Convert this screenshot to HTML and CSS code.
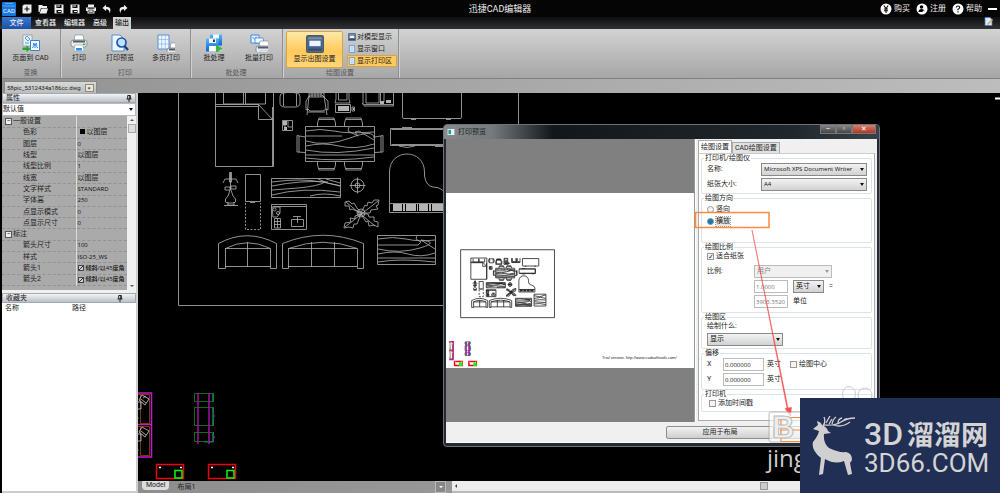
FILE: index.html
```html
<!DOCTYPE html>
<html lang="zh-CN">
<head>
<meta charset="utf-8">
<meta name="viewport" content="width=device-width, initial-scale=1">
<title>迅捷CAD编辑器</title>
<link rel="stylesheet" href="styles.css">
</head>
<body>
<svg class="defs" aria-hidden="true">
  <defs>
    <linearGradient id="gBlue" x1="0" y1="0" x2="0" y2="1"><stop offset="0" stop-color="#5cb8f8"/><stop offset="1" stop-color="#0b63cf"/></linearGradient>
    <symbol id="i-floppy" viewBox="0 0 10 10"><path fill="#eee" d="M.5.5h9v9h-9z"/><path fill="#111" d="M2.5 1h5v3h-5zM2.500 6h5v3.500h-5z"/><path fill="#eee" d="M3 1.500h3v1h-3zM4 7h3v1h-3z"/></symbol>
    <symbol id="i-printer" viewBox="0 0 18 18"><path fill="#fff" stroke="#7f93a8" stroke-width=".7" d="M5 1h8l1 6H4z"/><rect x="1" y="6" width="16" height="7" rx="2.500" fill="#e7ebef" stroke="#77808a" stroke-width=".8"/><path fill="#555c66" d="M3 6.500h12v2H3z"/><path fill="#3bbd35" d="M13 9.500h2.500v1.500H13z"/><path fill="#fff" stroke="#8aa" stroke-width=".6" d="M5 11h8l1 6H4z"/><path fill="#2c8cf0" d="M6 14h6v2.500H6z"/></symbol>
    <symbol id="i-page" viewBox="0 0 9 9"><path fill="#dcecff" stroke="#4b86d0" stroke-width=".8" d="M1.500.5h6v8h-6z"/><path stroke="#7badE6" stroke-width=".6" fill="none" d="M3 2.500h3M3 4.500h3M3 6.500h3"/></symbol>
    <symbol id="i-screen" viewBox="0 0 16 16"><rect x=".5" y=".5" width="15" height="15" rx="1.500" fill="#526987" stroke="#4d5968"/><path fill="#7f8c9c" d="M2 2h12v3H2z"/><rect x="2.500" y="4.500" width="11" height="6" fill="#eef5ff" stroke="#375b95"/><path fill="#334c70" d="M2 12h12v2H2z"/></symbol>
    <symbol id="i-pin" viewBox="0 0 6 7"><path fill="none" stroke="#111" stroke-width=".9" d="M1.700.5h2.600V4M1.700.5V4M.5 4h5M3 4v3M3.800.5V4"/></symbol>

    <g id="plan" class="plan" fill="none">
      <path d="M178.500 59.500H518.500V305.500H178.500Z"/>
      <path d="M215.500 89.500H273.500V166.500H215.500ZM272.500 107V166M215.500 104.500H258.500L272.500 119.500H258.500V104.500M215.500 106.500H258M223.500 92V104H243.500V92M245.500 92V104H265.500V92"/>
      <path d="M283 93Q280 93 280 97V103Q280 107 285 107H295Q300 107 300 103V97Q300 93 297 93M283.500 90V106M296.500 90V106M284 93Q290 91 296 93"/>
      <path d="M310 95L306 101V110L308 109L310 111H323L326 109L328 110V101L322 95ZM309 96L307 115M324 96L327 115M308 112L325 112M309 93H324V97H309ZM312 93V97M315 93V97M318 93V97M321 93V97"/>
      <path d="M336 90.500H349V99L350 103H335L336 99ZM338.500 91V100H347V91M335.500 104.500H350.500V112.500H335.500ZM352 107H354.500V111H352Z"/>
      <path class="solid" d="M338 106H349V111H338ZM353 108H354V110H353Z"/>
      <path d="M363 90V103L362 104H364V106H393.500V90M366 90V103H379V90M380.500 90V104M384 90V102M364.500 104.500H393"/>
      <path class="solid" d="M380 101H384V104H380ZM386 100H391V103H386Z"/>
      <path d="M402.500 91.500H461.500V117.500Q461.500 118.500 460 118.500H404Q402.500 118.500 402.500 117.500ZM411 119.500H416M446 119.500H451"/>
      <path d="M282.500 120.500H292.500V130.500H282.500ZM285 121V130M288 121V127H292M283 125H286"/>
      <path class="solid" d="M283 121H287V125H283ZM284 127H287V130H284Z"/>
      <path d="M305.500 126.500H374.500V161.500H305.500Z"/>
      <path d="M306 131Q320 128 334 131T374 132M306 136H342M306 141Q326 147 350 138T374 138M306 146Q323 142 339 146T374 144M306 150Q336 156 374 148M306 155H374M306 158Q336 162 374 157M349 127L348 131L358 136L355 132L359 131L374 140"/>
      <path d="M317.500 126V123L319 118H334L335.500 123V126M344.500 126V123L346 118H361L362.500 123V126M317.500 162V165L319 170H334L335.500 165V162M344.500 162V165L346 170H361L362.500 165V162M305 137L297 135.500V152L305 152.500M375 137L383 135.500V152L375 152.500M299 136V152M381 136V152M319 119.500H334M346 119.500H361M319 168.500H334M346 168.500H361"/>
      <path d="M390.500 128.500H449.500V145.500H390.500ZM391.500 129.500H448.500V144.500H391.500M402 127.500H412M399 146Q407 149 415 146M435 146.500H445"/>
      <path d="M389.500 212.500V172C389.500 148 424.500 148 424.500 172V176Q426 186 433 187Q444 187 447.500 198V212.500ZM390 203.500H447"/>
      <path class="solid" d="M393 204H402V211H393ZM403 204H405V211H403ZM406 204H416V211H406ZM417 204H418V211H417ZM419 204H428V211H419ZM429 204H431V211H429ZM432 204H443V211H432Z"/>
      <path d="M230.500 172V190M223 183L225 179H236L238 183M225 187H230V190H225ZM231 186H236V189H231ZM230 190L228 196L225.500 199V202L228 203H233L235.500 202V199L233 196L231 190M227 205H234V202M228 202V205M224 205.500H238"/>
      <path d="M229.500 172.500H231.500V182H229.500Z"/>
      <path d="M245.500 174.500H260.500V201.500H245.500ZM250 202.500H255"/>
      <path stroke-dasharray="2 1.500" d="M245.500 203V229.500H260.500V203"/>
      <path d="M271.500 178.500H340.500V197.500H271.500ZM272 182Q301 178 322 182T340 186M272 186Q301 180 328 182M272 190L298 188Q319 186 325 182M272 195Q302 187 340 192M310 196Q324 192 340 196M318 179Q328 184 340 186M326 179L340 183"/>
      <circle cx="357.500" cy="185.500" r="6.500"/><circle cx="357.500" cy="185.500" r="2.500"/><path d="M349.500 185.500H365.500M357.500 177.500V193.500"/>
      <path d="M271.500 204.500H306.500V229.500H271.500ZM273 206.500H306M272 207H280V213L277 217H273ZM291.500 219.500H303.500V226.500H291.500ZM293 216.500H301M297.500 217V223M274.500 218.500H280.500V228H274.500ZM277.500 218V228M274 221.500H281M274 224.500H281"/>
      <circle cx="274.500" cy="209.500" r="1.500"/><circle cx="278" cy="213" r="1.500"/>
      <path d="M361 213L352 209L350 210L349 206L345 206V202L349 201L352 204L354 203L357 208ZM361 213L365 205L367 206L368 202L372 203L374 200L379 200L378 205L376 206L378 209L371 210L370 213ZM361 214L355 216L355 219L350 218L351 222L345 223L344 228L349 227L353 228L354 224L357 224ZM361 214L366 222L368 221L369 226L374 225L378 227L378 222L374 221L374 217L369 217L368 214ZM346 202L375 226M378 201L345 227"/>
      <circle cx="361" cy="213" r="4"/><circle cx="360" cy="213" r="2"/>
      <path d="M218.500 268.500V243.500Q247 228 276.500 243.500V268.500H270.500V248.500Q247 237 225.500 248.500V268.500ZM225 248.500H270M225 266.500H270M247.500 242V267"/>
      <path d="M282.500 268.500V243.500Q323 227 363.500 243.500V268.500H357.500V248.500Q323 236 288.500 248.500V268.500ZM288 248.500H357M288 266.500H357M311.500 242V267M334.500 242V267"/>
      <path d="M377.500 235.500H435.500V264.500H377.500ZM378 239Q393 236 406 239T435 240M378 245H418L421 242L416 239L417 236M378 249Q400 254 420 248T421 240L435 249M378 254Q395 250 408 254T435 253M378 258H435M378 262Q400 258 435 262"/>
      <path d="M444.500 220.500H487.500V263.500H444.500ZM445 226L465 230L487 223M445 236L468 232L487 236M445 243Q465 238 487 242M445 248L487 251M445 256Q463 252 487 258"/>
      <g class="plan-color">
        <path stroke="#c818c8" stroke-width="1.500" d="M137 393H151.500V457H137M137 424.500H151"/>
        <path stroke="#8a4a0c" d="M137 394.500H149.500V423.500H140.500V394M137 426.500H149.500V455.500H140.500V426"/>
        <path stroke="#ccc" d="M138 402H141V409H138M138 434H141V441H138M142 395L149 399L145 405L139 400ZM143 398L146 396M142 427L149 431L145 437L139 432ZM141 399L146 403M141 431L146 435"/>
        <path stroke="#16c016" d="M137 418H139M137 450H139"/>
        <path stroke="#118a11" d="M194.500 393.500H212.500V401.500H194.500ZM194.500 407.500H212.500V425.500H194.500ZM194.500 432.500H212.500V441.500H194.500Z"/>
        <path stroke="#0a9494" d="M213.500 393V402M213.500 407V426M213.500 432V442H204"/>
        <path stroke="#a010a0" stroke-width="1.500" d="M198 393V444M209 393V444M214 415V417M214 436V438"/>
        <path stroke="#f00010" stroke-width="1.500" d="M156.500 464.500H183.500V478.500H156.500ZM208.500 464.500H235.500V478.500H208.500Z"/>
        <path stroke="#0f0" stroke-width="1.500" d="M175 470.500H182V478H175ZM227 470.500H234V478H227Z"/>
        <path stroke="#fff" stroke-width="1.500" d="M159 467.500H161M180 467.500H182M211 467.500H213M232 467.500H234"/>
      </g>
    </g>
  </defs>
</svg>

<div class="app">
  <header class="titlebar">
    <div class="quick">
      <svg class="logo" viewBox="0 0 14 14" role="img" aria-label="CAD"><rect width="14" height="14" rx="1" fill="#1976dc"/><path d="M3 1.500h8M1 4h12" stroke="#7fc0ff" stroke-width=".7"/><text x="7" y="11" text-anchor="middle" class="logo-text">CAD</text></svg>
      <button aria-label="新建"><svg viewBox="0 0 10 10"><path d="M.5 1.500h1V.5h8v8h-1v1h-8z" fill="#eee"/><path d="M5 2.500v5M2.500 5h5" stroke="#111" stroke-width="1.200"/></svg></button>
      <button aria-label="打开"><svg viewBox="0 0 10 10"><path d="M.5 1h3.500l1 1h4V4H3L1.500 8H.5z" fill="#eee"/><path d="M3.500 4.500H10L8.500 9.500H1.500z" fill="#eee"/></svg></button>
      <button aria-label="保存"><svg><use href="#i-floppy"/></svg></button>
      <button aria-label="另存为"><svg><use href="#i-floppy"/></svg></button>
      <button aria-label="打印文件"><svg viewBox="0 0 10 10"><path d="M2 .5h6v2.500H2zM0 3.500h10v3.500h-1.500v2.500h-7V7H0z" fill="#eee"/><path d="M2.800 6h4.400v2.300H2.800zM1.500 4.500h7" stroke="#111" stroke-width=".7" fill="none"/></svg></button>
      <button aria-label="撤销"><svg viewBox="0 0 10 10"><path d="M4 .800L.5 4 4 7V5.200Q7.500 5 7.500 9.200 10.500 3 4 2.800z" fill="#eee"/></svg></button>
      <button aria-label="重做"><svg viewBox="0 0 10 10"><path d="M6 .800L9.500 4 6 7V5.200Q2.500 5 2.500 9.200-.5 3 6 2.800z" fill="#eee"/></svg></button>
    </div>
    <h1 class="app-title">迅捷CAD编辑器</h1>
    <div class="account">
      <a href="#buy"><svg viewBox="0 0 12 12"><circle cx="6" cy="6" r="5.500" fill="#fff"/><path d="M3.800 2.500L6 5.500l2.200-3M6 5.500V10M4 6h4M4 7.800h4" stroke="#111" stroke-width="1.100" fill="none"/></svg>购买</a>
      <a href="#register"><svg viewBox="0 0 12 12"><circle cx="6" cy="6" r="5.500" fill="#fff"/><circle cx="5.500" cy="4" r="1.800"/><path d="M2.500 9Q2.500 6 5.500 6T8.500 9z"/><path d="M8 7v3M6.500 8.500h3" stroke="#fff" stroke-width=".8"/></svg>注册</a>
      <a href="#help"><svg viewBox="0 0 12 12"><circle cx="6" cy="6" r="5.500" fill="#fff"/><path d="M4.300 4.500Q4.400 3 6 3T7.700 4.500Q7.600 5.500 6 6.200V7.300M6 8.300v1.200" stroke="#111" stroke-width="1.200" fill="none"/></svg>帮助</a>
      <button class="minimise" aria-label="最小化"></button>
    </div>
  </header>

  <nav class="tabs">
    <button class="tab tab-file">文件</button>
    <button class="tab">查看器</button>
    <button class="tab">编辑器</button>
    <button class="tab">高级</button>
    <button class="tab tab-on">输出</button>
    <button class="skin" aria-label="皮肤"><svg viewBox="0 0 9 9"><path d="M1 .5h5l2 2v6H1z" fill="#dcecff" stroke="#3d7bd0" stroke-width=".8"/><path d="M3 7L8 2l1 1-5 5z" fill="#e9a33c"/></svg></button>
  </nav>

  <section class="ribbon">
    <div class="group">
      <div class="tools"><button class="tool tool-wide"><svg viewBox="0 0 18 18"><path d="M1 1h9v11H1z" fill="#e4f0fa" stroke="#789" stroke-width=".6"/><path d="M3 4l2-2 3 3-2 2zM3 9h4" stroke="#58a0d8" fill="none"/><path d="M8.500 6.500h9v10h-9z" fill="#f4faff" stroke="#3a83d4"/><path d="M10 14l5-5M11 9l5 5" stroke="#3e96e8"/><circle cx="13" cy="11.500" r="1.800" fill="none" stroke="#3e96e8"/><path d="M.5 13.500h4v-2l4 3.500-4 3v-2h-4z" fill="#28a32c"/></svg>页面到 CAD</button></div>
      <div class="caption">变换</div>
    </div>
    <div class="group">
      <div class="tools">
        <button class="tool tool-narrow"><svg><use href="#i-printer"/></svg>打印</button>
        <button class="tool"><svg viewBox="0 0 18 18"><path d="M1 1h8l4 4v12H1z" fill="#eef6ff" stroke="#5590cf"/><circle cx="10.500" cy="8.500" r="4.500" fill="#bfe2ff" stroke="#1d55a8" stroke-width="1.700"/><path d="M13.500 12l3.500 4" stroke="#173f88" stroke-width="2.200"/></svg>打印预览</button>
        <button class="tool"><svg viewBox="0 0 18 18"><path d="M1 1h11v14H1z" fill="#eef6ff" stroke="#5590cf"/><path d="M1 5.500h11M1 10h11M4.700 1v14M8.300 1v14" stroke="#8ab6e4" stroke-width=".7"/><svg x="9" y="8" width="9" height="9"><use href="#i-printer"/></svg></svg>多页打印</button>
      </div>
      <div class="caption">打印</div>
    </div>
    <div class="group">
      <div class="tools">
        <button class="tool"><svg viewBox="0 0 18 18"><path d="M5 .5h12v11H5z" fill="url(#gBlue)"/><path d="M8 .5h6v4H8z" fill="#fff"/><path d="M1 4.500h12.500v13H1z" fill="url(#gBlue)"/><path d="M4 4.500h7v4.500H4zM4 12h7v5.500H4z" fill="#fff"/><path d="M8 5.500h2v2.500H8z" fill="#147"/><path d="M11 11l6.500 3.500L11 18z" fill="#2bc12f"/></svg>批处理</button>
        <button class="tool tool-last"><svg viewBox="0 0 18 18"><path d="M1 1h8v8H1z" fill="#edf5ff" stroke="#3788e0"/><path d="M2.500 3l3 3M6 2.500v4" stroke="#3788e0"/><path d="M5 4h8l1 5H5z" fill="#f8fbff" stroke="#3788e0" stroke-width=".8"/><svg x="5" y="6" width="12" height="12"><use href="#i-printer"/></svg></svg>批量打印</button>
      </div>
      <div class="caption">批处理</div>
    </div>
    <div class="group">
      <div class="tools">
        <button class="tool tool-active"><svg><use href="#i-screen"/></svg>显示出图设置</button>
        <div class="stack">
          <button class="mini"><svg><use href="#i-screen"/></svg>对模型显示</button>
          <button class="mini"><svg><use href="#i-page"/></svg>显示窗口</button>
          <button class="mini mini-on"><svg><use href="#i-page"/></svg>显示打印区</button>
        </div>
      </div>
      <div class="caption">绘图设置</div>
    </div>
  </section>

  <div class="docs">
    <div class="doc"><span>58pic_5312434a186cc.dwg</span><button aria-label="关闭文件">×</button></div>
  </div>

  <main class="work">
    <aside class="side">
      <h2 class="bar">属性<svg><use href="#i-pin"/></svg></h2>
      <div class="pick pick-flat"><select aria-label="属性集"><option>默认值</option></select></div>
      <div class="props-wrap">
        <table class="props">
          <tbody>
            <tr class="head"><th><i>−</i>一般设置</th><td></td></tr>
            <tr><th>色彩</th><td><span class="swatch"></span>以图层</td></tr>
            <tr><th>图层</th><td class="latin">0</td></tr>
            <tr><th>线型</th><td>以图层</td></tr>
            <tr><th>线型比例</th><td class="latin">1</td></tr>
            <tr><th>线宽</th><td>以图层</td></tr>
            <tr><th>文字样式</th><td class="latin">STANDARD</td></tr>
            <tr><th>字体高</th><td class="latin">250</td></tr>
            <tr><th>点显示模式</th><td class="latin">0</td></tr>
            <tr><th>点显示尺寸</th><td class="latin">0</td></tr>
            <tr class="head"><th><i>−</i>标注</th><td></td></tr>
            <tr><th>箭头尺寸</th><td class="latin">100</td></tr>
            <tr><th>样式</th><td class="latin">ISO-25_WS</td></tr>
            <tr><th>箭头1</th><td class="latin"><span class="slash"></span>倾斜/以45度角</td></tr>
            <tr><th>箭头2</th><td class="latin"><span class="slash"></span>倾斜/以45度角</td></tr>
          </tbody>
        </table>
        <div class="vscroll"><b class="up"></b><b class="thumb"></b><b class="down"></b></div>
      </div>
      <h2 class="bar bar-fav">收藏夹<svg><use href="#i-pin"/></svg></h2>
      <table class="favs"><thead><tr><th>名称</th><th>路径</th></tr></thead></table>
    </aside>

    <section class="stage">
      <svg class="drawing" viewBox="138 93 862 388" preserveAspectRatio="xMinYMin slice" role="img" aria-label="图纸"><use href="#plan"/><path d="M995 98.500h5" stroke="#fff" stroke-width="2"/></svg>
      <div class="sheetbar">
        <button class="sheet sheet-on">Model</button>
        <button class="sheet">布局1</button>
        <button class="expand" aria-label="展开"></button>
        <div class="hscroll"><b></b><i></i></div>
      </div>
    </section>
  </main>

  <section class="dialog" role="dialog" aria-label="打印预览">
    <header class="dialog-title">
      <svg viewBox="0 0 8 7"><path d="M0 0h8v7H0z" fill="#e8f2f4"/><path d="M1 1h3v5H1z" fill="#26988f"/></svg>
      <h2>打印预览</h2>
      <div class="win"><button aria-label="最小化">–</button><button aria-label="最大化">▫</button><button class="close" aria-label="关闭">✕</button></div>
    </header>
    <div class="dialog-body">
      <div class="preview">
        <svg viewBox="446 193 248 175" role="img" aria-label="预览"><rect x="446" y="193" width="248" height="175" fill="#fff"/><use href="#plan" transform="translate(460.500 317.500) scale(.276) translate(-178 -305)"/><text x="602" y="359" class="trial">Trial version. http://www.cadsofttools.com/</text></svg>
      </div>
      <div class="settings">
        <div class="ptabs"><button class="ptab ptab-on">绘图设置</button><button class="ptab">CAD绘图设置</button></div>
        <form class="page">
          <fieldset><legend>打印机/绘图仪</legend>
            <div class="row"><label class="lab" for="printer">名称:</label><span class="pick grow"><select id="printer" class="latin"><option>Microsoft XPS Document Writer</option></select></span></div>
            <div class="row"><label class="lab" for="paper">纸张大小:</label><span class="pick grow"><select id="paper" class="latin"><option>A4</option></select></span></div>
          </fieldset>
          <fieldset class="orient"><legend>绘图方向</legend>
            <div class="row"><label class="opt"><input type="radio" name="o">竖向</label></div>
            <div class="row"><label class="opt"><input type="radio" name="o" checked><span class="focus">横放</span></label></div>
          </fieldset>
          <fieldset class="scale"><legend>绘图比例</legend>
            <div class="row row-low"><label class="opt"><input type="checkbox" checked>适合纸张</label></div>
            <div class="row"><label class="lab" for="ratio">比例:</label><span class="pick w-ratio off"><select id="ratio" disabled><option>用户</option></select></span></div>
            <div class="row"><span class="lab"></span><input class="num latin" aria-label="比例值" value="1.0000" disabled><span class="pick w-unit"><select aria-label="单位"><option>英寸</option></select></span>=</div>
            <div class="row"><span class="lab"></span><input class="num latin" id="units" value="3903.3520" disabled><label for="units">单位</label></div>
          </fieldset>
          <fieldset><legend>绘图区</legend>
            <div class="row row-low"><label for="what">绘制什么:</label></div>
            <div class="row"><span class="pick w-what"><select id="what"><option>显示</option></select></span></div>
          </fieldset>
          <fieldset class="offset"><legend>偏移</legend>
            <div class="row offs"><label for="ox">X</label><input class="num wide latin" id="ox" value="0.000000"><span>英寸</span><label class="opt centre"><input type="checkbox">绘图中心</label></div>
            <div class="row offs"><label for="oy">Y</label><input class="num wide latin" id="oy" value="0.000000"><span>英寸</span></div>
          </fieldset>
          <fieldset class="stamp"><legend>打印机</legend>
            <div class="row row-low"><label class="opt"><input type="checkbox">添加时间戳</label></div>
          </fieldset>
        </form>
      </div>
    </div>
    <footer class="dialog-foot"><button>应用于布局</button><button aria-label="打印"></button></footer>
    <svg class="marks" viewBox="443 124 437 360" aria-hidden="true">
      <path d="M695.500 212.500h73.500v15h-73.500z" fill="none" stroke="#ff8a3c" stroke-width="1.500"/>
      <path d="M752 230L788 408l3.500-.6L790.500 416 785 408.600l2-.4z" fill="#f5403e" stroke="#f5403e" stroke-width=".5" opacity=".9"/>
      <g fill="none" stroke="#ccc"><ellipse cx="849" cy="394" rx="6.500" ry="7.500"/><ellipse cx="865" cy="395" rx="7" ry="7"/></g>
      <rect x="769" y="412" width="34" height="30" rx="2" fill="#fff" opacity=".65" stroke="#999"/>
      <path d="M810 417.500h-29v24h29M781 430h29" fill="none" stroke="#ff8a3c" stroke-width="1.200"/>
      <text x="772" y="438" class="mark-b">B</text>
      <text x="767" y="467" class="mark-word">jing</text>
    </svg>
  </section>

  <aside class="brand">
    <svg viewBox="0 0 44 60" aria-hidden="true"><path fill="#d0d0d0" d="M1 13L6 9 5 5Q9 6 10 9Q15 11 16 15L19 17 12 18Q11 27 17 32Q27 37 34 36Q40 37 40 44L38 47 40 58 36 59 32 45Q23 49 13 43L11 58 7 59 9 42Q-1 34 1 26Q6 20 7 15Z"/><path fill="none" stroke="#d0d0d0" stroke-width="1.300" d="M11 10Q14 6 12 1M14 7L18 0M12 9Q23 10 29 6T43 2M20 8Q21 3 24 1M17 8L20 3M26 7Q26 3 30 2M31 5Q33 2 36 3M21 9Q30 12 38 6"/></svg>
    <div class="brand-text"><div class="brand-top"><b>3D</b><strong>溜溜网</strong></div><div class="brand-url">3D66.COM</div></div>
  </aside>
</div>
</body>
</html>
```
FILE: styles.css
```css
* { box-sizing: border-box; }
:root {
  --text: 7px;
  --small: 6px;
  --ink: #222;
}
body {
  margin: 0;
  background: #000;
  color: var(--ink);
  font: var(--text)/9px Roboto, "Noto Sans CJK SC", sans-serif;
}
button, input, select {
  font: inherit;
  color: inherit;
  margin: 0;
  padding: 0;
  border: 0;
  background: none;
  border-radius: 0;
}
h1, h2 { margin: 0; font-size: inherit; font-weight: 400; }
.defs { position: absolute; width: 0; height: 0; }
.app { position: relative; display: flex; flex-direction: column; min-height: 100vh; overflow: hidden; }

/* title bar */
.titlebar { display: grid; grid-template-columns: 1fr auto 1fr; align-items: center; height: 17px; background: #050505; color: #eee; }
.quick { display: flex; align-items: center; gap: 6px; padding-left: 2px; }
.quick button { display: flex; }
.quick button svg { width: 10px; height: 10px; }
.quick .logo { width: 14px; height: 14px; }
.logo-text { font-size: 6px; fill: #fff; }
.app-title { font-size: 9px; line-height: 12px; }
.account { display: flex; align-items: center; justify-content: flex-end; gap: 6px; padding-right: 3px; font-size: 8px; }
.account a { display: flex; align-items: center; gap: 2px; color: #eee; text-decoration: none; }
.account svg { width: 12px; height: 12px; }
.minimise { width: 9px; height: 2px; background: #fff; }

/* ribbon tabs */
.tabs { display: flex; height: 12px; background: linear-gradient(#0d0e0f, #303234); padding-left: 2px; }
.tab { padding: 0 4px; color: #eee; font-weight: 500; white-space: nowrap; }
.tab-file { width: 29px; background: linear-gradient(#3679d0, #1c4fa4); }
.tab-on { background: #d2d2d2; color: #222; padding: 0 2px; margin-left: 2px; }
.skin { margin-left: auto; margin-right: 7px; display: flex; }
.skin svg { width: 9px; height: 9px; }

/* ribbon */
.ribbon { display: flex; height: 50px; background: linear-gradient(#d2d2d2, #a6a6a6); border-bottom: 1px solid #808080; margin-left: 2px; }
.group { display: flex; flex-direction: column; justify-content: space-between; border-right: 1px solid #8f8f8f; box-shadow: 1px 0 #d0d0d0; padding-right: 1px; }
.tools { display: flex; height: 39px; padding-top: 2px; }
.tool { width: 46px; height: 37px; display: flex; flex-direction: column; align-items: center; gap: 2px; padding-top: 3px; white-space: nowrap; }
.tool svg { width: 18px; height: 18px; }
.tool-wide { width: 57px; }
.tool-narrow { width: 36px; }
.tool-last { width: 44px; }
.tool-active { width: 57px; margin-left: 3px; background: linear-gradient(#fce9a8, #ffc95b 55%, #ffd67b); border: 1px solid #d9a541; border-radius: 2px; }
.stack { display: flex; flex-direction: column; padding-left: 4px; width: 54px; }
.mini { display: flex; align-items: center; gap: 1px; height: 12px; flex: none; border: 1px solid transparent; white-space: nowrap; }
.mini svg { width: 8px; height: 8px; }
.mini-on { background: #ffc95b; border-color: #d9a541; }
.caption { text-align: center; color: #555; height: 9px; }

/* document tabs */
.docs { display: flex; height: 14px; margin-left: 2px; padding: 2px 0 0 2px; background: linear-gradient(90deg, #929292, #bdbdbd); }
.doc { display: flex; align-items: center; gap: 4px; padding: 0 2px; background: linear-gradient(#d8d8d8, #bcbcbc); border: 1px solid #888; border-bottom: 0; font-size: var(--small); }
.doc button { width: 9px; height: 8px; line-height: 6px; border: 1px solid #8b8b78; background: #e8e8da; }

/* side panels */
.work { flex: 1; display: flex; }
.side { width: 136px; margin-left: 2px; display: flex; flex-direction: column; background: #f0f0f0; border-right: 2px solid #cdcdcd; border-bottom: 2px solid #ccc; }
.bar { display: flex; justify-content: space-between; align-items: center; height: 10px; padding: 0 3px; background: linear-gradient(#f1f3f5, #bcc1c8); border: 1px solid #a6a9ad; }
.bar svg { width: 6px; height: 7px; }
.bar-fav { margin-top: 3px; padding-right: 12px; }
.props-wrap { display: flex; align-items: flex-start; height: 174px; overflow: hidden; background: #aaa; }
.props { flex: 1; width: 124px; height: 170px; table-layout: fixed; border-collapse: collapse; background: #aaa; }
.props th, .props td { padding: 0 0 0 1px; height: 11px; line-height: 9px; font-weight: 400; text-align: left; white-space: nowrap; overflow: hidden; border-bottom: 1px dashed #929292; }
.props th { width: 74px; padding-left: 21px; border-right: 1px solid #ddd; }
.latin { font-family: "Open Sans", "Noto Sans CJK SC", sans-serif; font-size: var(--small); font-weight: 500; }
.props td.latin { font-weight: 500; color: #111; }
.props .head th { padding-left: 3px; }
.props .head i { display: inline-block; width: 7px; height: 7px; line-height: 5px; margin-right: 1px; text-align: center; font-style: normal; background: #eee; border: 1px solid #555; }
.swatch { display: inline-block; width: 5px; height: 5px; margin: 0 2px; background: #000; }
.slash { display: inline-block; width: 6px; height: 6px; margin: 0 2px 0 0; border: 1px solid #444; background: linear-gradient(135deg, #ccc 42%, #333 42%, #333 58%, #ccc 58%); vertical-align: middle; }
.vscroll { align-self: stretch; width: 9px; display: flex; flex-direction: column; align-items: center; padding: 3px 0; background: #f0f0f0; }
.vscroll .thumb { width: 8px; height: 9px; margin-top: 3px; background: #ddd; border: 1px solid #aaa; }
.up, .down { border: 2px solid transparent; width: 0; height: 0; }
.up { border-top: 0; border-bottom-color: #555; }
.down { margin-top: auto; border-bottom: 0; border-top-color: #555; }
.favs { width: 100%; table-layout: fixed; border-collapse: collapse; background: #fff; }
.side::after { content: ""; flex: 1; background: #fff; }
.favs th { padding: 1px 3px; font-weight: 400; text-align: left; }

/* select boxes */
.pick { position: relative; display: flex; height: 13px; }
.pick select { appearance: none; width: 100%; padding: 0 2px; background: linear-gradient(#f3f3f3, #d2d2d2); border: 1px solid #8a8a8a; color: #111; opacity: 1; }
.pick::after { content: ""; position: absolute; right: 3px; top: 5px; border: 2px solid transparent; border-top: 3px solid #111; border-bottom: 0; pointer-events: none; }
.pick-flat select { background: #fff; border-color: #bbb; padding: 0; }
.pick.off select { background: #f0f0f0; border-color: #bbb; color: #888; }
.off::after { border-top-color: #999; }

/* drawing area */
.stage { flex: 1; min-width: 0; display: flex; flex-direction: column; background: #000; }
.drawing { flex: 1; width: 100%; min-height: 0; height: 0; color: #b4b4b4; }
.plan { stroke: currentColor; stroke-width: 0.8; }
.plan path, .plan circle { vector-effect: non-scaling-stroke; }
.plan .solid { fill: currentColor; stroke: none; }
.sheetbar { display: flex; height: 12px; background: linear-gradient(90deg, #8e8e8e, #a8a8a8); }
.sheet { padding: 0 4px; margin-left: 4px; }
.sheet-on { height: 9px; background: #ddd; border-radius: 0 0 4px 4px; }
.expand { margin-left: auto; width: 11px; background: #888; border: 1px solid #bbb; display: grid; place-items: center; }
.expand::after { content: ""; border: 2px solid transparent; border-top-color: #fff; border-bottom: 0; }
.hscroll { width: calc(100% - 314px); margin-left: 6px; background: #ececec; display: flex; align-items: center; border-bottom: 2px solid #bbb; }
.hscroll b { margin-left: 3px; border: 2px solid transparent; border-right-color: #444; border-left: 0; }
.hscroll i { width: 8px; height: 8px; margin-left: 303px; background: #ccc; border: 1px solid #999; }

/* print preview window */
.dialog { position: absolute; left: 443px; top: 124px; width: 437px; padding: 0 2px 3px; border: 1px solid #6c7278; border-radius: 4px; background: #232a30; }
.dialog-title { display: flex; align-items: center; gap: 3px; height: 14px; margin: 0 -2px; padding-left: 3px; background: linear-gradient(90deg, #868a8d, #747a7e 11%, #12171a 25%, #20272c 80%, #39424a); border-radius: 3px 3px 0 0; }
.dialog-title svg { width: 8px; height: 6px; }
.win { display: flex; align-self: flex-start; margin-left: auto; margin-right: 3px; color: #fff; line-height: 8px; }
.win button { width: 16px; height: 9px; background: linear-gradient(#888, #444); border: 1px solid #777; border-top: 0; line-height: 7px; }
.win .close { width: 24px; background: linear-gradient(#d28272, #b53320); }
.dialog-body { display: flex; background: #f0f0f0; }
.preview { flex: 1; display: flex; align-items: center; background: #808080; border-right: 1px solid #999; }
.preview svg { width: 100%; color: #222; }
.trial { font: 4px "Liberation Sans", sans-serif; fill: #222; }
.settings { width: 182px; padding: 1px 2px 1px 2px; display: flex; flex-direction: column; border-left: 1px solid #fff; }
.ptabs { display: flex; align-items: flex-end; }
.ptab { height: 11px; padding: 0 2px; border: 1px solid #aaa; border-bottom: 0; background: #e2e2e2; }
.ptab-on { height: 13px; background: #fff; }
.page { flex: 1; display: flex; flex-direction: column; padding: 0 2px 8px; background: #fff; border: 1px solid #aaa; border-top-color: #ccc; }
fieldset { min-width: 0; margin: 0; padding: 0 4px 2px 5px; border: 1px solid #dbe3e8; border-radius: 2px; }
legend { padding: 0 1px; margin-left: -3px; line-height: 9px; }
.row { display: flex; align-items: center; gap: 5px; height: 13px; white-space: nowrap; }
.row + .row { margin-top: 2px; }
.row-low { height: 9px; }
.orient { padding-bottom: 15px; }
.orient .row { height: 12px; }
.orient .row + .row { margin-top: 0; }
.scale { padding-bottom: 4px; }
.scale .row-low + .row { margin-top: 4px; }
.offset, .stamp { padding-bottom: 3px; }
.stamp .opt { margin-left: 2px; }
.lab { width: 49px; }
.scale .lab { width: 42px; }
.grow { flex: 1; }
.w-ratio { width: 78px; }
.w-unit { width: 31px; }
.w-what { width: 76px; }
.opt { display: flex; align-items: center; gap: 2px; }
.opt input { appearance: none; width: 7px; height: 7px; border: 1px solid #999; background: #f4f4f4; display: grid; place-items: center; }
.opt input[type="radio"] { border-radius: 50%; }
.opt input[type="radio"]:checked { background: #1679a8; border-color: #7897a8; }
.opt input[type="checkbox"]:checked::after { content: "✓"; font: 7px/6px "DejaVu Sans", sans-serif; color: #224; }
.focus { outline: 1px dotted #999; background: #e8e8e8; }
.num { width: 34px; height: 13px; padding: 0 1px; border: 1px solid #bbb; background: #fff; color: #111; }
.num.latin { font-size: var(--small); }
.num:disabled { color: #777; }
.num.wide { width: 41px; }
.offs { gap: 3px; }
.offs label:first-child { width: 13px; }
.centre { margin-left: 6px; }
.dialog-foot { display: flex; justify-content: flex-end; gap: 6px; height: 21px; padding: 4px 3px 4px 0; background: #f0f0f0; border-bottom: 1px solid #fff; }
.dialog-foot button { width: 108px; height: 13px; background: linear-gradient(#f2f2f2, #cfcfcf); border: 1px solid #8e8e8e; border-radius: 2px; }
.dialog-foot button + button { width: 94px; }
.marks { position: absolute; left: -1px; top: -1px; width: 437px; height: 360px; pointer-events: none; }
.mark-b { font: 700 31px "Liberation Sans", sans-serif; fill: #eee; stroke: #bbb; stroke-width: 1; }
.mark-word { font: 24px "Open Sans", sans-serif; fill: #ccc; }

/* brand badge */
.brand { position: absolute; right: 0; bottom: 0; width: 200px; height: 95px; display: flex; align-items: center; gap: 8px; padding-left: 12px; background: #212f55; color: #d4d4d4; }
.brand svg { width: 44px; height: 60px; }
.brand-top { display: flex; align-items: center; gap: 4px; height: 34px; }
.brand-top b { font: 500 32px/34px Roboto, sans-serif; }
.brand-top strong { font: 700 27px/34px "Noto Sans CJK SC", sans-serif; }
.brand-url { font-size: 26px; line-height: 24px; }
```
